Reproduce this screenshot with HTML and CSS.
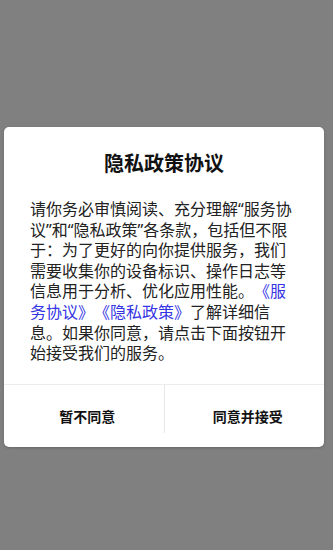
FILE: index.html
```html
<!DOCTYPE html>
<html lang="zh-CN">
<head>
<meta charset="utf-8">
<title>隐私政策协议</title>
<link rel="stylesheet" href="styles.css">
</head>
<body>
<div class="overlay">
  <div class="dialog">
    <h1 class="title">隐私政策协议</h1>
    <p class="content">请你务必审慎阅读、充分理解“服务协议”和“隐私政策”各条款，包括但不限于：为了更好的向你提供服务，我们需要收集你的设备标识、操作日志等信息用于分析、优化应用性能。<span class="link">《服务协议》</span><span class="link">《隐私政策》</span>了解详细信息。如果你同意，请点击下面按钮开始接受我们的服务。</p>
    <div class="actions">
      <div class="btn">暂不同意</div>
      <div class="sep"></div>
      <div class="btn">同意并接受</div>
    </div>
  </div>
</div>
</body>
</html>
```

FILE: styles.css
```css
html, body {
  margin: 0;
  padding: 0;
}
body {
  background: #808080;
  height: 550px;
  overflow: hidden;
  font-family: "Noto Sans", "Noto Sans CJK SC", sans-serif;
}
.overlay {
  padding: 127px 9px 0 4px;
}
.dialog {
  width: 320px;
  background: #ffffff;
  border-radius: 5px;
  box-shadow: 0 1px 3px rgba(0,0,0,0.2);
  padding-top: 24px;
  box-sizing: border-box;
}
.title {
  margin: 0 0 22px 0;
  font-size: 20px;
  line-height: 26px;
  font-weight: bold;
  text-align: center;
  color: #111111;
}
.content {
  margin: 0 0 20px 0;
  padding: 0 31px 0 26px;
  font-size: 16px;
  line-height: 20.6px;
  color: #222222;
  text-spacing-trim: space-all;
  font-feature-settings: "chws" 0, "halt" 0, "palt" 0;
  line-break: strict;
}
.link {
  color: #3434e4;
}
.actions {
  display: flex;
  border-top: 1px solid #ececec;
}
.btn {
  flex: 1;
  height: 62px;
  display: flex;
  align-items: center;
  justify-content: center;
  padding-left: 7px;
  font-size: 14px;
  font-weight: bold;
  color: #111111;
}
.sep {
  width: 1px;
  height: 48px;
  background: #e8e8e8;
}
```
